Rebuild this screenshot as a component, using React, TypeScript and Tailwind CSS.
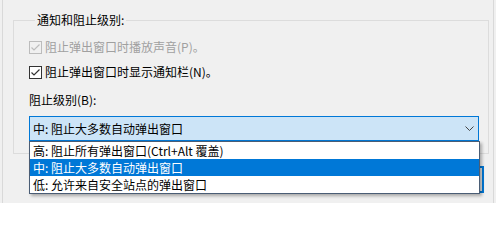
import React from "react";

function Check({ disabled }: { disabled?: boolean }) {
  const c = disabled ? "#bcbcbc" : "#333333";
  return (
    <svg width="13" height="13" viewBox="0 0 13 13" className="shrink-0">
      <rect x="0.5" y="0.5" width="12" height="12" fill={disabled ? "#f0f0f0" : "#ffffff"} stroke={c} />
      <polyline points="2.5,6.5 5,9 10.5,3.5" fill="none" stroke={c} strokeWidth="1.2" />
    </svg>
  );
}

export default function App() {
  return (
    <div className="w-[496px] h-[203px] bg-[#f0f0f0] overflow-hidden font-['Noto_Sans_CJK_SC',sans-serif] text-[12px] leading-[16px] text-black">
      <div className="ml-[2px] w-[492px] h-[203px] border-l border-r border-[#d9d9d9] flex flex-col">
        <fieldset className="mt-[12px] ml-[10px] w-[476px] border border-[#dcdcdc] pl-[15px] pr-[9px] pt-[10px] pb-[12px]">
          <legend className="ml-[6px] px-[2px] leading-[16px]">通知和阻止级别:</legend>
          <div className="flex items-center gap-[3px] h-[18px] text-[#a0a0a0]">
            <Check disabled />
            <span>阻止弹出窗口时播放声音(P)。</span>
          </div>
          <div className="flex items-center gap-[3px] h-[18px] mt-[7px]">
            <Check />
            <span>阻止弹出窗口时显示通知栏(N)。</span>
          </div>
          <div className="h-[18px] mt-[10px] flex items-center">阻止级别(B):</div>
          <div className="relative mt-[7px]">
            <div className="h-[25px] border border-[#0078d7] bg-[#cce4f7] flex items-center justify-between pl-[3px] pr-[4px]">
              <span>中: 阻止大多数自动弹出窗口</span>
              <svg width="9" height="5" viewBox="0 0 9 5">
                <polyline points="0.5,0.5 4.5,4.5 8.5,0.5" fill="none" stroke="#444" strokeWidth="1" />
              </svg>
            </div>
            <div className="absolute z-10 left-0 right-[-1px] top-full border border-[#4a5d75] bg-white shadow-[2px_2px_3px_rgba(0,0,0,0.3)]">
              <div className="h-[17px] flex items-center pl-[3px]">高: 阻止所有弹出窗口(Ctrl+Alt 覆盖)</div>
              <div className="h-[17px] flex items-center pl-[3px] bg-[#0078d7] text-white">中: 阻止大多数自动弹出窗口</div>
              <div className="h-[17px] flex items-center pl-[3px]">低: 允许来自安全站点的弹出窗口</div>
            </div>
          </div>
        </fieldset>
        <div className="flex justify-end mt-[12px] mr-[9px]">
          <button className="w-[75px] h-[27px] border-2 border-[#0078d7] bg-[#e1e1e1]">确定</button>
        </div>
      </div>
    </div>
  );
}
